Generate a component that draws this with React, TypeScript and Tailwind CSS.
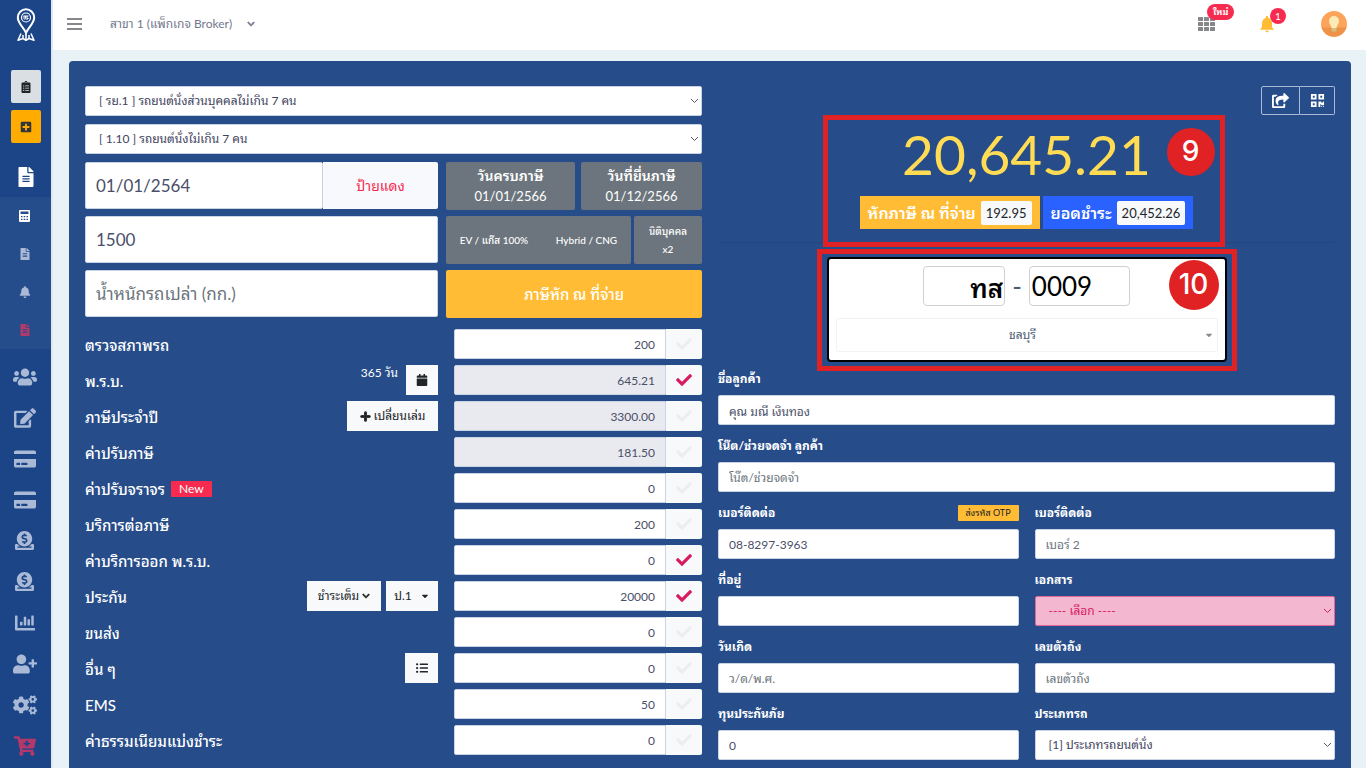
import { useState } from "react";
import type { ReactNode } from "react";
import clsx from "clsx";
import {
  FaBell,
  FaCalendar,
  FaCaretDown,
  FaCartPlus,
  FaChartBar,
  FaCheck,
  FaChevronDown,
  FaClipboardList,
  FaCogs,
  FaCreditCard,
  FaDonate,
  FaEdit,
  FaFileAlt,
  FaListUl,
  FaPlus,
  FaPlusSquare,
  FaQrcode,
  FaShareSquare,
  FaUserPlus,
  FaUsers,
} from "react-icons/fa";
import { MdNotifications } from "react-icons/md";

const inputBase =
  "h-[30px] w-full rounded-[2px] border border-[#c9d3e4] bg-white px-[10px] text-[12px] text-[#4a4f69] placeholder:text-[#6c757d] focus:outline-none";

function LogoIcon() {
  return (
    <svg width="20" height="34" viewBox="0 0 20 34" fill="none" stroke="#fff">
      <path d="M10 25 C8.500 20.500 1.800 15.500 1.800 9.500 A8.200 8.200 0 0 1 18.200 9.500 C18.200 15.500 11.500 20.500 10 25Z" strokeWidth="2" />
      <circle cx="10" cy="9.500" r="4.500" strokeWidth="1.200" />
      <path d="M7.500 8h5M8 8v2.500c0 1 1.500 1 1.500 0V8M11 8v4M12.500 10.500H11" strokeWidth="1" />
      <path d="M5 25.500 L2 32.300 L7 30.500 L10 32.300 L13 30.500 L18 32.300 L15 25.500 M7 30.500 V27 M13 30.500 V27 M10 32.300 V26" strokeWidth="1.500" strokeLinejoin="round" />
    </svg>
  );
}

function CalculatorIcon() {
  return (
    <svg width="11" height="12" viewBox="0 0 11 12" fill="#fff">
      <path fillRule="evenodd" d="M1 0h9a1 1 0 0 1 1 1v10a1 1 0 0 1-1 1H1a1 1 0 0 1-1-1V1a1 1 0 0 1 1-1Zm.500 1.500v2.500h8V1.500ZM2 6v1.300h1.500V6Zm2.700 0v1.300h1.600V6ZM7.500 6v1.300H9V6ZM2 8.800v1.300h1.500V8.800Zm2.700 0v1.300h1.600V8.800Zm2.800 0v1.300H9V8.800Z" />
    </svg>
  );
}

function AppsIcon() {
  return (
    <svg width="17" height="14" viewBox="0 0 17 14" fill="#85878a">
      {[0, 5, 10].map((y) =>
        [0, 6, 12].map((x) => <rect key={`${x}-${y}`} x={x} y={y} width="5" height="4" rx="0.500" />)
      )}
    </svg>
  );
}

function BulbAvatar() {
  return (
    <svg width="26" height="26" viewBox="0 0 26 26">
      <circle cx="13" cy="13" r="13" fill="#fba45a" />
      <path d="M0.600 16.500h24.800A13 13 0 0 1 0.600 16.500Z" fill="#ef9249" />
      <path d="M13 5a5 5 0 0 1 5 5c0 3-2 4-2.500 7h-5C10 14 8 13 8 10a5 5 0 0 1 5-5Z" fill="#fdebb5" />
      <rect x="10.500" y="17" width="5" height="3.500" rx="1" fill="#d3c27c" />
    </svg>
  );
}

const subMenu = [
  { label: "คำนวณ", icon: <CalculatorIcon /> },
  { label: "เอกสาร", icon: <FaFileAlt size={12} className="text-[#a9b9d6]" /> },
  { label: "แจ้งเตือน", icon: <FaBell size={12} className="text-[#a9b9d6]" /> },
  { label: "ยกเลิก", icon: <FaFileAlt size={12} className="text-[#b03a6b]" /> },
];

const mainMenu = [
  { label: "ลูกค้า", icon: <FaUsers size={24} /> },
  { label: "แก้ไข", icon: <FaEdit size={22} /> },
  { label: "บัตร", icon: <FaCreditCard size={22} /> },
  { label: "ชำระ", icon: <FaCreditCard size={22} /> },
  { label: "รายรับ", icon: <FaDonate size={19} /> },
  { label: "รายจ่าย", icon: <FaDonate size={19} /> },
  { label: "รายงาน", icon: <FaChartBar size={20} /> },
  { label: "เพิ่มผู้ใช้", icon: <FaUserPlus size={24} /> },
  { label: "ตั้งค่า", icon: <FaCogs size={24} /> },
  { label: "สั่งซื้อ", icon: <FaCartPlus size={22} className="text-[#b5386b]" /> },
];

function Sidebar() {
  return (
    <aside className="flex w-[53px] shrink-0 flex-col items-center border-r-2 border-[#dfe8f2] bg-[#1c4587]">
      <a href="#" aria-label="หน้าแรก" className="flex h-[50px] items-center">
        <LogoIcon />
      </a>
      <div className="flex flex-col gap-[7px] pt-5 pb-[13px]">
        <button aria-label="รายการ" className="flex h-[33px] w-[30px] items-center justify-center rounded-[2px] bg-[#dadfe4] text-[#212529]">
          <FaClipboardList size={12} />
        </button>
        <button aria-label="เพิ่ม" className="flex h-[33px] w-[30px] items-center justify-center rounded-[2px] bg-[#ffab00] text-[#33373c]">
          <FaPlusSquare size={12} />
        </button>
      </div>
      <a href="#" aria-label="งาน" className="flex h-[41px] items-center text-white">
        <FaFileAlt size={20} />
      </a>
      <nav className="w-full bg-[#264d8b]">
        {subMenu.map((item) => (
          <a key={item.label} href="#" aria-label={item.label} className="flex h-[38px] items-center justify-center pr-[2px]">
            {item.icon}
          </a>
        ))}
      </nav>
      <nav className="w-full pt-[7px] text-[#a9b9d6]">
        {mainMenu.map((item) => (
          <a key={item.label} href="#" aria-label={item.label} className="flex h-[41px] items-center justify-center pr-[2px]">
            {item.icon}
          </a>
        ))}
      </nav>
    </aside>
  );
}

function Topbar() {
  return (
    <header className="flex h-[50px] items-center justify-between bg-white pr-[19px] pb-[3px] pl-[14px] text-[#74788d]">
      <div className="flex items-center">
        <button aria-label="เมนู" className="flex w-[15px] flex-col gap-[3px]">
          <span className="h-[2px] w-full bg-[#85878a]" />
          <span className="h-[2px] w-full bg-[#85878a]" />
          <span className="h-[2px] w-full bg-[#85878a]" />
        </button>
        <button className="ml-7 flex items-center gap-[15px] text-[12px]">
          สาขา 1 (แพ็กเกจ Broker)
          <FaChevronDown size={8} strokeWidth={40} />
        </button>
      </div>
      <div className="flex items-center">
        <button aria-label="แอป" className="relative mr-[42px]">
          <AppsIcon />
          <span className="absolute -top-[13px] left-[9px] rounded-full bg-[#f72b50] px-[6px] text-[9px] leading-4 font-bold text-white">ใหม่</span>
        </button>
        <button aria-label="แจ้งเตือน" className="relative mr-[44px] text-[#ffbc34]">
          <MdNotifications size={20} />
          <span className="absolute -top-[6px] left-[13px] h-4 w-4 rounded-full bg-[#f72b50] text-center text-[10px] leading-4 text-white">1</span>
        </button>
        <button aria-label="บัญชี">
          <BulbAvatar />
        </button>
      </div>
    </header>
  );
}

function SelectField({ id, label, options, pink }: { id: string; label?: string; options: string[]; pink?: boolean }) {
  return (
    <div className="relative">
      <select
        id={id}
        aria-label={label}
        className={clsx(
          "h-[30px] w-full appearance-none rounded-[2px] border px-[13px] text-[12px] focus:outline-none",
          pink ? "border-[#e2679a] bg-[#f3b8d0] text-[#d81b60]" : "border-[#c9d3e4] bg-white text-[#3f4460]"
        )}
      >
        {options.map((o) => (
          <option key={o}>{o}</option>
        ))}
      </select>
      <svg
        className={clsx("pointer-events-none absolute top-3 right-[3px]", pink ? "text-[#d81b60]" : "text-[#555a64]")}
        width="9"
        height="6"
        viewBox="0 0 9 6"
        fill="none"
        stroke="currentColor"
      >
        <path d="M1 1l3.500 3.500L8 1" />
      </svg>
    </div>
  );
}

const grayBox = "flex h-12 flex-col items-center justify-center rounded-[2px] bg-[#6c757d] text-white";
const bigInput =
  "h-[47px] w-full min-w-0 rounded-[2px] border border-[#c9d3e4] bg-white px-[10px] text-[17px] text-[#4a4f69] placeholder:text-[#6c757d] focus:outline-none";

function TaxInfo() {
  return (
    <div className="mt-2 grid grid-cols-[353fr_256fr] gap-x-2 gap-y-[6px]">
      <div className="flex">
        <input aria-label="วันจดทะเบียน" defaultValue="01/01/2564" className={bigInput} />
        <button className="h-[47px] w-[115px] shrink-0 rounded-r-[2px] bg-[#f8f9fc] text-[14px] text-[#f72b50]">ป้ายแดง</button>
      </div>
      <div className="grid grid-cols-[129fr_121fr] gap-[6px] text-[13px] leading-5">
        <button className={grayBox}>
          <span className="text-[14px] font-semibold">วันครบภาษี</span>
          <span>01/01/2566</span>
        </button>
        <button className={grayBox}>
          <span className="text-[14px] font-semibold">วันที่ยื่นภาษี</span>
          <span>01/12/2566</span>
        </button>
      </div>
      <input aria-label="ซีซี" defaultValue="1500" className={bigInput} />
      <div className="grid grid-cols-[185fr_68fr] gap-[3px] text-[10px] leading-[18px] font-medium">
        <div className="flex h-12 items-center justify-around rounded-[2px] bg-[#6c757d] text-white">
          <button>EV / แก๊ส 100%</button>
          <button>Hybrid / CNG</button>
        </div>
        <button className={grayBox}>
          <span>นิติบุคคล</span>
          <span>x2</span>
        </button>
      </div>
      <input aria-label="น้ำหนักรถ" placeholder="น้ำหนักรถเปล่า (กก.)" className={bigInput} />
      <button className="h-12 rounded-[2px] bg-[#ffbc34] text-[15px] font-medium text-white">ภาษีหัก ณ ที่จ่าย</button>
    </div>
  );
}

type Fee = { id: string; name: string; value: string; checked?: boolean; locked?: boolean; isNew?: boolean; extra?: ReactNode };

const smallButton = "flex h-[30px] items-center justify-center bg-[#f8f9fa] text-[12px] text-[#212529]";

const fees: Fee[] = [
  { id: "inspect", name: "ตรวจสภาพรถ", value: "200" },
  {
    id: "act",
    name: "พ.ร.บ.",
    value: "645.21",
    checked: true,
    locked: true,
    extra: (
      <>
        <span className="self-start text-[12px] leading-4 text-white">365 วัน</span>
        <button aria-label="ปฏิทิน" className={clsx(smallButton, "w-8")}>
          <FaCalendar size={12} />
        </button>
      </>
    ),
  },
  {
    id: "tax",
    name: "ภาษีประจำปี",
    value: "3300.00",
    locked: true,
    extra: (
      <button className={clsx(smallButton, "w-[91px] gap-[3px]")}>
        <FaPlus size={11} strokeWidth={40} />
        เปลี่ยนเล่ม
      </button>
    ),
  },
  { id: "tax-fine", name: "ค่าปรับภาษี", value: "181.50", locked: true },
  { id: "traffic-fine", name: "ค่าปรับจราจร", value: "0", isNew: true },
  { id: "renew", name: "บริการต่อภาษี", value: "200" },
  { id: "act-service", name: "ค่าบริการออก พ.ร.บ.", value: "0", checked: true },
  {
    id: "insurance",
    name: "ประกัน",
    value: "20000",
    checked: true,
    extra: (
      <div className="flex gap-[5px]">
        <button className={clsx(smallButton, "w-[74px] gap-[3px]")}>
          ชำระเต็ม
          <FaChevronDown size={8} strokeWidth={40} />
        </button>
        <button className={clsx(smallButton, "w-[52px] gap-2")}>
          ป.1
          <FaCaretDown size={10} />
        </button>
      </div>
    ),
  },
  { id: "shipping", name: "ขนส่ง", value: "0" },
  {
    id: "other",
    name: "อื่น ๆ",
    value: "0",
    extra: (
      <button aria-label="รายการอื่น" className={clsx(smallButton, "w-[33px]")}>
        <FaListUl size={12} />
      </button>
    ),
  },
  { id: "ems", name: "EMS", value: "50" },
  { id: "installment", name: "ค่าธรรมเนียมแบ่งชำระ", value: "0" },
];

function FeeRow({ fee }: { fee: Fee }) {
  const [checked, setChecked] = useState(!!fee.checked);

  return (
    <div className="grid h-[30px] grid-cols-[353fr_248fr] gap-x-4">
      <div className="flex items-center justify-between">
        <div className="flex items-center gap-[6px] pt-[2px]">
          <label htmlFor={fee.id} className="text-[15px] leading-5 font-medium text-white">
            {fee.name}
          </label>
          {fee.isNew && <span className="rounded-[1px] bg-[#f72b50] px-2 text-[12px] leading-4 text-white">New</span>}
        </div>
        <div className="flex h-full items-center gap-2">{fee.extra}</div>
      </div>
      <div className="flex">
        <input
          id={fee.id}
          defaultValue={fee.value}
          readOnly={fee.locked}
          className={clsx(
            "h-[30px] w-full min-w-0 rounded-l-[2px] border border-[#c9d3e4] px-[10px] text-right text-[12px] text-[#4a4f69] focus:outline-none",
            fee.locked ? "bg-[#e9eaef]" : "bg-white"
          )}
        />
        <button
          aria-label={fee.name}
          onClick={() => setChecked(!checked)}
          className={clsx(
            "flex h-[30px] w-9 shrink-0 items-center justify-center rounded-r-[2px] bg-[#f8f9fa]",
            checked ? "text-[#d81b60]" : "text-[#ededee]"
          )}
        >
          <FaCheck size={16} />
        </button>
      </div>
    </div>
  );
}

function Summary() {
  return (
    <div className="relative mr-[6px] flex h-[132px] w-[402px] flex-col items-center border-5 border-[#e02224] pl-[6px]">
      <div className="h-[76px] text-[55px] leading-[68px] text-[#ffdc54]">20,645.21</div>
      <div className="flex gap-[3px] text-[16px] text-white">
        <div className="flex h-[33px] items-center gap-[5px] bg-[#ffbc34] px-2 font-semibold">
          หักภาษี ณ ที่จ่าย
          <span className="rounded-[2px] bg-[#f8f9fa] px-[5px] text-[13px] leading-6 font-normal text-[#212529]">192.95</span>
        </div>
        <div className="flex h-[33px] items-center gap-[5px] bg-[#2962ff] px-2 font-semibold">
          ยอดชำระ
          <span className="rounded-[2px] bg-[#f8f9fa] px-[5px] text-[13px] leading-6 font-normal text-[#212529]">20,452.26</span>
        </div>
      </div>
      <span className="absolute top-2 right-[5px] h-12 w-12 rounded-full bg-[#e02224] text-center font-[Inter] text-[28px] leading-[46px] font-medium text-white">9</span>
    </div>
  );
}

function PlateCard() {
  return (
    <div className="relative mt-[2px] h-[122px] w-[420px] border-5 border-[#e02224] px-[5px] pt-[3px] pb-1">
      <div className="h-full rounded-[4px] border-2 border-black bg-white px-[7px] pt-[7px]">
        <div className="flex items-center justify-center gap-[7px] text-[26px] text-[#4b5b73]">
          <input aria-label="หมวดอักษร" defaultValue="ทส" className="h-10 w-[82px] rounded-[4px] border border-[#cfd0d2] pr-px text-right font-semibold text-black focus:outline-none" />
          -
          <input aria-label="เลขทะเบียน" defaultValue="0009" className="h-10 w-[101px] rounded-[4px] border border-[#cfd0d2] px-[2px] text-black focus:outline-none" />
        </div>
        <div className="relative mt-3">
          <select aria-label="จังหวัด" className="h-[34px] w-full appearance-none rounded-[2px] border border-[#f3f3f5] pr-2 text-center text-[12px] text-[#4b5b73] focus:outline-none">
            <option>ชลบุรี</option>
          </select>
          <FaCaretDown size={10} className="pointer-events-none absolute top-3 right-1 text-[#8a8a8a]" />
        </div>
      </div>
      <span className="absolute top-[6px] right-[13px] h-[50px] w-[50px] rounded-full bg-[#e02224] text-center font-[Inter] text-[28px] leading-[48px] font-medium text-white">10</span>
    </div>
  );
}

function Field({ id, label, action, children }: { id: string; label: string; action?: ReactNode; children: ReactNode }) {
  return (
    <div>
      <div className="flex h-[37px] items-center justify-between pt-1">
        <label htmlFor={id} className="text-[12px] leading-4 font-bold text-white">
          {label}
        </label>
        {action}
      </div>
      {children}
    </div>
  );
}

function CustomerForm() {
  return (
    <form className="-mt-[13px] grid grid-cols-2 gap-x-4">
      <div className="col-span-2">
        <Field id="customer" label="ชื่อลูกค้า">
          <input id="customer" defaultValue="คุณ มณี เงินทอง" className={inputBase} />
        </Field>
        <Field id="note" label="โน๊ต/ช่วยจดจำ ลูกค้า">
          <input id="note" placeholder="โน๊ต/ช่วยจดจำ" className={inputBase} />
        </Field>
      </div>
      <Field
        id="phone"
        label="เบอร์ติดต่อ"
        action={
          <button type="button" className="h-4 w-[61px] rounded-[1px] bg-[#ffbc34] text-[9px] leading-4 text-[#212529]">
            ส่งรหัส OTP
          </button>
        }
      >
        <input id="phone" defaultValue="08-8297-3963" className={inputBase} />
      </Field>
      <Field id="phone2" label="เบอร์ติดต่อ">
        <input id="phone2" placeholder="เบอร์ 2" className={inputBase} />
      </Field>
      <Field id="address" label="ที่อยู่">
        <input id="address" className={inputBase} />
      </Field>
      <Field id="document" label="เอกสาร">
        <SelectField id="document" options={["---- เลือก ----"]} pink />
      </Field>
      <Field id="birthday" label="วันเกิด">
        <input id="birthday" placeholder="ว/ด/พ.ศ." className={inputBase} />
      </Field>
      <Field id="chassis" label="เลขตัวถัง">
        <input id="chassis" placeholder="เลขตัวถัง" className={inputBase} />
      </Field>
      <Field id="capital" label="ทุนประกันภัย">
        <input id="capital" defaultValue="0" className={inputBase} />
      </Field>
      <Field id="car-type" label="ประเภทรถ">
        <SelectField id="car-type" options={["[1] ประเภทรถยนต์นั่ง"]} />
      </Field>
    </form>
  );
}

export default function App() {
  return (
    <div className="flex min-h-screen bg-[#e9f2f6] font-['Lato','Noto_Sans_Thai_Looped','Loma','Waree','Garuda','Sarabun','FreeSerif','Noto_Serif_Thai','Noto_Sans',sans-serif]">
      <Sidebar />
      <div className="flex min-w-0 flex-1 flex-col">
        <Topbar />
        <main className="flex flex-1 flex-col pt-[11px] pr-[15px] pl-4">
          <div className="grid flex-1 grid-cols-2 gap-x-4 rounded-t-[4px] bg-[#264c8a] px-4 pt-[25px] pb-2">
            <section>
              <div className="flex flex-col gap-2">
                <SelectField id="car-class" label="ประเภทรถ" options={["[ รย.1 ] รถยนต์นั่งส่วนบุคคลไม่เกิน 7 คน"]} />
                <SelectField id="car-subclass" label="ลักษณะรถ" options={["[ 1.10 ] รถยนต์นั่งไม่เกิน 7 คน"]} />
              </div>
              <TaxInfo />
              <div className="mt-[11px] flex flex-col gap-[6px]">
                {fees.map((fee) => (
                  <FeeRow key={fee.id} fee={fee} />
                ))}
              </div>
            </section>
            <section>
              <div className="flex justify-end">
                <button aria-label="แชร์" className="flex h-[29px] w-[39px] items-center justify-center rounded-l-[2px] border border-[#a9b9d6] text-white">
                  <FaShareSquare size={17} />
                </button>
                <button aria-label="คิวอาร์โค้ด" className="flex h-[29px] w-[35px] items-center justify-center rounded-r-[2px] border border-l-0 border-[#a9b9d6] text-white">
                  <FaQrcode size={15} />
                </button>
              </div>
              <div className="relative flex flex-col items-center">
                <hr className="absolute inset-x-0 top-[127px] border-[#23467f]" />
                <Summary />
                <PlateCard />
              </div>
              <CustomerForm />
            </section>
          </div>
        </main>
      </div>
    </div>
  );
}
